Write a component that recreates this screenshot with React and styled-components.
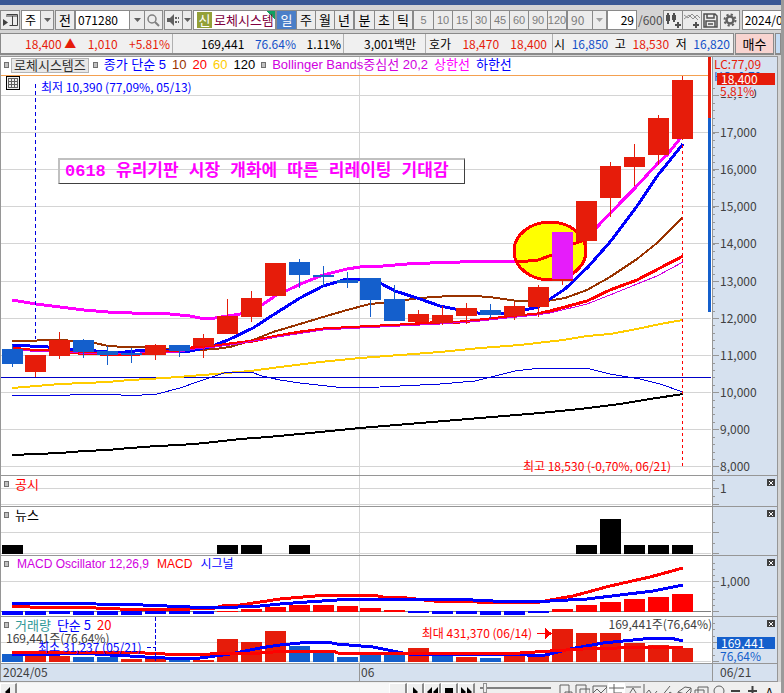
import React from 'react';
import styled, { createGlobalStyle } from 'styled-components';

const BASE = '"Noto Sans CJK KR", sans-serif';
const WIDE = '"Liberation Sans", "Noto Sans CJK KR", sans-serif';

const RED = '#e61c0a';
const BLUE = '#145fcc';
const LINE = '#969696';
const GRID = '#d4d4d4';
const AXIS = '#d6e1ef';

const GlobalStyle = createGlobalStyle`
  * { box-sizing: border-box; }
  body {
    margin: 0;
    background: #d4d4d4;
    font-family: ${BASE};
    font-size: 12px;
    line-height: 16px;
    color: #000;
    white-space: nowrap;
  }
  button, input, select {
    font: inherit;
    color: inherit;
    margin: 0;
    padding: 0;
    border-radius: 0;
    outline: none;
  }
`;

const Page = styled.div`
  display: flex;
  flex-direction: column;
  height: 100vh;
  min-height: 480px;
  overflow: hidden;
  border-right: 3px solid #9a9a9a;
`;

const TitleStrip = styled.header`
  flex: 0 0 5px;
  background: #3a5894;
  margin-right: -3px;
`;

const Toolbar = styled.div`
  display: flex;
  flex: 0 0 26px;
  padding: 5px 0 1px;
  overflow: hidden;
`;

const Group = styled.div`
  display: flex;
  flex: 0 0 auto;
  height: 20px;
  margin-right: ${({ $gap = 0 }) => $gap}px;
  border: 1px solid #8a8a8a;
  background: #fff;
`;

const ToolButton = styled.button`
  display: flex;
  align-items: center;
  justify-content: center;
  width: ${({ $w }) => $w}px;
  border: 0;
  border-left: ${({ $first }) => ($first ? 0 : '1px solid #8a8a8a')};
  background: ${({ $active }) => ($active ? '#4a7fc8' : '#ececec')};
  color: ${({ $active, $muted }) => ($active ? '#fff' : $muted ? '#7c7c7c' : '#000')};
  font-family: ${({ $muted }) => ($muted ? WIDE : BASE)};
  font-size: ${({ $muted }) => ($muted ? 11 : 13)}px;
`;

const Field = styled.input`
  width: ${({ $w }) => $w}px;
  border: 0;
  padding: 0 2px;
  background: #fff;
  text-align: ${({ $align }) => $align || 'left'};
`;

const Picker = styled.select`
  appearance: none;
  width: ${({ $w }) => $w}px;
  border: 0;
  padding: 0 3px;
  background: ${({ $muted }) => ($muted ? '#ececec' : '#fff')};
  color: ${({ $muted }) => ($muted ? '#7c7c7c' : '#000')};
`;

const StockName = styled.div`
  display: flex;
  align-items: center;
  width: 81px;
  padding-left: 3px;
  gap: 2px;
  font-size: 13px;
  color: #800040;
  background: linear-gradient(225deg, #10a060 6px, #fff 6px);
`;

const Badge = styled.span`
  width: 15px;
  text-align: center;
  background: #94a038;
  color: #fff;
`;

const Total = styled.span`
  width: 34px;
  padding-left: 1px;
  line-height: 20px;
  color: #505050;
`;

const QuoteRow = styled.div`
  display: flex;
  flex: 0 0 22px;
  align-items: stretch;
  margin: 2px 0 1px;
  overflow: hidden;
`;

const QuoteBox = styled.div`
  display: flex;
  flex: 1 1 0;
  min-width: 0;
  border: 1px solid #8a8a8a;
  border-width: 1px 1px 2px;
  background: #f0f0f0;
`;

const QuoteCell = styled.div`
  display: flex;
  align-items: center;
  justify-content: space-between;
  flex: 1 1 ${({ $w }) => $w}px;
  min-width: 0;
  padding: 0 ${({ $end = 2 }) => $end}px 0 ${({ $pad = 3 }) => $pad}px;
  border-left: ${({ $first }) => ($first ? 0 : '1px solid #b0b0b0')};
`;

const Num = styled.span`
  color: ${({ $c }) => $c || '#000'};
`;

const TradeButton = styled.button`
  flex: 0 0 ${({ $w }) => $w}px;
  margin-left: 1px;
  border: 1px solid #8a8a8a;
  border-width: 1px 1px 2px;
  background: ${({ $bg }) => $bg};
  font-size: 13px;
`;

const Chart = styled.main`
  display: flex;
  flex-direction: column;
  flex: 1 1 auto;
  min-height: 0;
  margin-right: 3px;
  border: 1px solid ${LINE};
  border-bottom: 0;
`;

const Panel = styled.section`
  display: grid;
  grid-template-columns: minmax(0, 1fr) 65px;
  flex: ${({ $h, $grow }) => ($grow ? `1 1 ${$h}px` : `0 0 ${$h}px`)};
  min-height: 0;
  border-bottom: 1px solid ${LINE};
`;

const Plot = styled.div`
  position: relative;
  min-height: 0;
  background: #fff;
`;

const Canvas = styled.svg`
  position: absolute;
  inset: 0;
  width: 100%;
  height: 100%;
  shape-rendering: crispEdges;
`;

const Scale = styled.div`
  position: relative;
  background: ${AXIS};
  border-left: 1px solid ${LINE};
`;

const ScaleLabel = styled.span`
  position: absolute;
  left: ${({ $left = 7 }) => $left}px;
  margin-top: -6px;
  line-height: 12px;
  color: ${({ $c }) => $c || '#404040'};
  background: ${({ $bg }) => $bg || 'transparent'};
`;

const PriceTag = styled(ScaleLabel)`
  left: 4px;
  right: 2px;
  padding-left: 4px;
  color: #fff;
`;

const CloseButton = styled.button`
  position: absolute;
  top: 3px;
  right: 2px;
  width: 8px;
  height: 7px;
  border: 0;
  background: #404040;
  display: flex;
  align-items: center;
  justify-content: center;
`;

const Legend = styled.div`
  position: relative;
  display: flex;
  align-items: center;
  gap: ${({ $gap = 6 }) => $gap}px;
  padding: 0 3px;
  font-family: ${({ $wide }) => ($wide ? WIDE : BASE)};
  font-size: ${({ $size = 13 }) => $size}px;
`;

const Marker = styled.i`
  width: 5px;
  height: 6px;
  border: 1px solid #707070;
  background: #c0c0c0;
`;

const LegendName = styled.span`
  height: 15px;
  line-height: 13px;
  margin: 0 -2px 0 -4px;
  padding: 0 2px;
  border: 1px solid #b4b4b4;
  background: #e8e8e8;
  color: #303030;
`;

const Note = styled.span`
  position: absolute;
  top: ${({ $top }) => $top};
  left: ${({ $left }) => $left || 'auto'};
  right: ${({ $right }) => $right || 'auto'};
  line-height: 14px;
  color: ${({ $c }) => $c};
`;

const Memo = styled(Note)`
  height: 26px;
  line-height: 23px;
  padding: 0 15px 0 5px;
  border: 1px solid #404040;
  border-top: 2px solid #c0c0c0;
  border-left: 2px solid #c0c0c0;
  font-family: "Liberation Mono", "Noto Sans CJK KR", monospace;
  font-weight: 700;
  font-size: 17px;
`;

const GridToggle = styled.button`
  position: absolute;
  top: 19px;
  left: 5px;
  width: 14px;
  height: 14px;
  border: 1px solid #000;
  background: #eee;
  display: flex;
`;

const DateCell = styled.div`
  display: flex;
  padding-left: ${({ $pad = 1 }) => $pad}px;
  background: ${AXIS};
  color: #404040;
  border-left: ${({ $edge }) => ($edge ? `1px solid ${LINE}` : 0)};
`;

const Month = styled.span`
  flex: 0 0 50%;
  padding-left: 1px;
  & + & {
    margin-left: 2px;
    border-left: 1px solid ${LINE};
  }
`;

const Footer = styled.footer`
  display: flex;
  flex: 0 0 11px;
  align-items: flex-start;
  background: #efefef;
  overflow: hidden;
  padding: 1px 3px 0 0;
`;

const Track = styled.div`
  flex: 1 1 0;
  height: 16px;
  background: #f7f7f7;
`;

const FootButton = styled.button`
  flex: 0 0 ${({ $w = 17 }) => $w}px;
  height: 18px;
  display: flex;
  align-items: center;
  justify-content: center;
  border: 1px solid #fff;
  border-width: 1px 2px 1px 1px;
  border-right-color: #8a8a8a;
  background: #efefef;
`;

const IconButton = styled.button`
  flex: 0 0 17px;
  height: 18px;
  padding: 1px;
  border: 0;
  background: ${({ $active }) => ($active ? '#fff' : 'transparent')};
`;

const Zoom = styled.input`
  appearance: none;
  flex: 0 0 71px;
  width: 71px;
  min-width: 0;
  && { margin: 0 6px 0 5px; }
  height: 10px;
  background: linear-gradient(#808080, #808080) 0 4px / 100% 2px no-repeat;
  &::-webkit-slider-thumb {
    appearance: none;
    width: 4px;
    height: 10px;
    border: 1px solid #909090;
    background: #efefef;
  }
`;

const ArrowDown = ({ color = '#606060' }) => (
  <svg width="7" height="4" viewBox="0 0 7 4"><path d="M0 0h7L3.5 4z" fill={color} /></svg>
);

// x of the left edge of candle i
const barX = (i) => Math.floor(2 + 23.93 * i);

// [body top, body bottom, high, low, rising]
const candles = [
  [349, 364, 345, 367, 0], [355, 372, 355, 377, 1], [340, 356, 332, 359, 1], [340, 352, 339, 358, 0],
  [351, 355, 346, 365, 0], [353, 355, 348, 363, 0], [345, 355, 344, 360, 1], [345, 351, 345, 357, 0],
  [338, 346, 334, 358, 1], [316, 334, 299, 334, 1], [298, 317, 291, 322, 1], [263, 296, 263, 296, 1],
  [262, 275, 259, 288, 0], [275, 277, 266, 286, 0], [280, 283, 272, 288, 0], [278, 300, 278, 317, 0],
  [299, 321, 285, 321, 0], [314, 322, 310, 322, 1], [315, 323, 306, 325, 1], [308, 316, 303, 324, 1],
  [310, 315, 304, 318, 0], [306, 316, 302, 320, 1], [287, 307, 285, 317, 1], [232, 281, 232, 285, 1],
  [201, 241, 201, 246, 1], [166, 198, 162, 217, 1], [157, 167, 144, 186, 1], [118, 155, 115, 165, 1],
  [80, 139, 76, 140, 1],
];

const news = [545, 0, 0, 0, 0, 0, 0, 0, 0, 545, 545, 0, 545, 0, 0, 0, 0, 0, 0, 0, 0, 0, 0, 0, 545, 519, 545, 545, 545];

const oscillator = [
  615, 615, 614, 615, 615, 615, 614, 614, 614, 611, 609, 607, 605, 605, 606, 608, 610, 613, 614, 614, 615, 615,
  613, 609, 605, 602, 599, 597, 594,
];

const volumes = [
  [654, 0], [656, 1], [656, 1], [657, 0], [657, 0], [659, 1], [659, 1], [660, 0], [660, 1], [639, 1],
  [642, 1], [631, 1], [646, 0], [653, 0], [657, 0], [653, 0], [655, 0], [648, 1], [655, 0], [657, 1],
  [658, 0], [655, 1], [656, 1], [629, 1], [633, 1], [633, 1], [643, 1], [645, 1], [648, 1],
];

const lines = {
  upper: '12,300 36,304 60,307 84,310 108,312 132,313 160,313 190,316 200,318 215,318 240,314 262,305 275,296 290,289 303,283 323,275 347,269 360,267 383,266 407,264 430,263 460,262 478,261 503,261 518,262 538,260 552,255 573,244 587,239 597,227 623,200 635,188 658,163 667,155 682,136',
  ma5: '12,345 30,346 48,347 70,349 84,350 108,352 125,352 145,350 170,351 190,351 205,348 215,345 228,340 253,328 273,315 300,298 323,286 337,282 347,279 360,280 382,284 395,291 417,298 440,306 455,309 478,313 500,314 520,311 538,307 550,299 565,289 588,267 610,242 635,209 658,175 683,144',
  ma10: '12,341 36,341 38,340 60,340 75,341 95,343 108,346 125,347 145,347 160,348 175,350 200,350 215,349 230,347 253,340 273,332 300,324 323,317 347,310 370,304 390,302 420,298 450,296 473,296 490,297 517,301 547,301 565,298 587,290 610,277 637,259 657,243 682,218',
  ma20: '12,348 30,350 60,351 78,353 100,354 125,355 140,354 155,352 180,351 195,347 215,346 237,343 253,341 277,336 300,332 323,329 360,327 400,325 430,323 460,322 480,320 507,317 537,314 550,311 587,301 610,290 637,280 660,268 683,256',
  middle: '12,349 30,351 60,352 78,353 125,354 155,352 180,352 195,349 215,347 237,344 277,337 323,330 360,328 400,326 440,324 480,321 507,318 537,315 550,313 587,304 610,295 637,284 657,276 683,262',
  ma60: '12,388 36,386 60,384 84,383 108,382 130,380 165,378 190,376 215,374 250,371 280,367 320,362 360,358 400,355 440,352 480,348 520,345 563,340 587,336 610,334 637,329 660,324 683,320',
  lower: '12,395 70,395 72,394 119,394 121,395 142,395 157,394 180,388 200,381 215,376 227,372 251,372 262,376 280,380 300,383 345,388 380,387 440,384 475,381 495,376 515,371 540,368 565,368 590,369 610,374 640,379 660,384 683,392',
  ma120: '12,455 36,454 60,453 84,451 108,450 130,448 157,446 180,445 205,443 240,439 268,437 310,433 360,428 420,423 480,418 540,413 580,409 620,404 650,399 683,394',
  macd: '12,606 30,607 70,607 96,608 120,609 190,609 215,608 222,606 240,605 260,602 280,599 303,597 327,595 373,595 383,597 407,598 433,601 477,602 510,603 540,602 550,600 573,596 610,586 650,577 683,568',
  signal: '12,603 48,603 96,604 143,605 190,607 238,607 260,606 280,604 307,602 337,600 360,599 453,599 493,601 550,601 587,599 620,595 653,591 683,585',
  vol5: '12,654 45,655 75,653 95,654 110,655 130,656 145,657 165,658 200,658 215,656 230,654 260,648 280,645 310,642 327,642 337,644 373,647 393,651 407,654 527,655 540,656 550,654 570,649 603,643 653,638 670,638 683,641',
  vol20: '12,652 130,652 145,653 165,654 210,654 218,653 260,653 287,651 333,651 338,653 520,653 550,651 583,649 617,648 653,647 683,648',
};

const Path = ({ of, color, w = 2 }) => (
  <polyline points={lines[of]} fill="none" stroke={color} strokeWidth={w} />
);

const Area = ({ top, height, grid, children }) => (
  <Canvas viewBox={`1 ${top} 711 ${height}`} preserveAspectRatio="none">
    {grid.map((y) => <rect key={y} x="1" y={y} width="710" height="1" fill={GRID} />)}
    <rect x="359" y={top} width="1" height={height} fill={GRID} />
    {children}
  </Canvas>
);

const Ticks = ({ top, height, major, minor }) => (
  <Canvas viewBox={`713 ${top} 64 ${height}`} preserveAspectRatio="none">
    {minor.map((y) => <rect key={y} x="713" y={y} width="2" height="1" fill={LINE} />)}
    {major.map((y) => <rect key={y} x="713" y={y} width="6" height="1" fill={LINE} />)}
  </Canvas>
);

const Close = () => (
  <CloseButton aria-label="닫기">
    <svg width="4" height="4" viewBox="0 0 4 4"><path d="M0 0l4 4M4 0L0 4" stroke="#fff" /></svg>
  </CloseButton>
);

const at = (y, top, height) => ({ top: `${((y - top) / height) * 100}%` });

const prices = [17, 16, 15, 14, 13, 12, 11, 10, 9, 8];
const priceY = (k) => Math.round(95 + (18 - k) * 37.1);
const priceMinor = Array.from({ length: 52 }, (_, n) => Math.round(88 + n * 7.42)).filter((y) => y < 474);

function TopBar() {
  return (
    <Toolbar>
      <Group $gap={1}>
        <ToolButton $first $w={18} aria-label="창">
          <svg width="15" height="14" viewBox="0 0 15 14" fill="none" stroke="#404040">
            <path d="M3.5 1.5h11v11h-8M3 3h11M9.5 3v9" />
            <path d="M0 6l5 3.5-5 3.5z" fill="#404040" stroke="none" />
          </svg>
        </ToolButton>
      </Group>
      <Group $gap={1}>
        <Picker $w={18} aria-label="구분" defaultValue="주"><option>주</option></Picker>
        <ToolButton $w={13} aria-label="구분 열기"><ArrowDown /></ToolButton>
      </Group>
      <Group><ToolButton $first $w={18}>전</ToolButton></Group>
      <Group $gap={1}>
        <Field $w={53} aria-label="종목코드" defaultValue="071280" />
        <ToolButton $w={15} aria-label="종목 목록"><ArrowDown /></ToolButton>
        <ToolButton $w={18} aria-label="검색">
          <svg width="13" height="13" viewBox="0 0 13 13" fill="none" stroke="#808080" strokeWidth="1.5">
            <circle cx="5" cy="5" r="4" /><path d="M8 8l4 4" strokeWidth="2" />
          </svg>
        </ToolButton>
      </Group>
      <Group $gap={1}>
        <ToolButton $first $w={17} aria-label="소리">
          <svg width="13" height="12" viewBox="0 0 13 12" fill="#606060">
            <path d="M0 4h3l4-4v12L3 8H0zM8 3h2v2H8zM8 7h2v2H8zM11 3h1v2h-1zM11 7h1v2h-1z" />
          </svg>
        </ToolButton>
        <ToolButton $w={9} aria-label="소리 설정"><ArrowDown /></ToolButton>
      </Group>
      <Group>
        <StockName><Badge>신</Badge>로체시스템</StockName>
      </Group>
      <Group>
        {['일', '주', '월', '년'].map((t, n) => (
          <ToolButton key={t} $first={n === 0} $w={19} $active={n === 0}>{t}</ToolButton>
        ))}
      </Group>
      <Group>
        {['분', '초', '틱'].map((t, n) => <ToolButton key={t} $first={n === 0} $w={19}>{t}</ToolButton>)}
      </Group>
      <Group>
        {['5', '10', '15', '30', '45', '60', '90', '120'].map((t, n) => (
          <ToolButton key={t} $first={n === 0} $w={19} $muted>{t}</ToolButton>
        ))}
      </Group>
      <Group>
        <Picker $w={24} $muted aria-label="분 주기" defaultValue="90"><option>90</option></Picker>
        <ToolButton $w={14} aria-label="분 주기 열기"><ArrowDown color="#a0a0a0" /></ToolButton>
      </Group>
      <Group><Field $w={28} $align="right" aria-label="봉 개수" defaultValue="29" /></Group>
      <Total>/600</Total>
      <Group $gap={2}>
        <ToolButton $first $w={18} aria-label="봉 추가">
          <svg width="16" height="16" viewBox="0 0 16 16" fill="#505050">
            <path d="M1 3h4v6H1zM2 1h2v11H2zM7 3h4v5H7zM8 1h2v9H8zM12 10h2v2h2v2h-2v2h-2v-2h-2v-2h2z" />
          </svg>
        </ToolButton>
        <ToolButton $w={19} aria-label="지표 추가">
          <svg width="16" height="16" viewBox="0 0 16 16">
            <path d="M0 7l5-4 4 4 4-4 3 3M0 3l4 3 4-4 6 6" fill="none" stroke="#909090" />
            <path d="M11 10h2v2h2v2h-2v2h-2v-2H9v-2h2z" fill="#505050" />
          </svg>
        </ToolButton>
        <ToolButton $w={19} aria-label="저장">
          <svg width="15" height="15" viewBox="0 0 15 15" fill="none" stroke="#505050" strokeWidth="1.5">
            <path d="M1 1h11l2 2v11H1zM4 1v4h7V1M3 14V8h9v6M5 11h5" />
          </svg>
        </ToolButton>
        <ToolButton $w={19} aria-label="설정">
          <svg width="14" height="14" viewBox="0 0 14 14" fill="none" stroke="#606060">
            <circle cx="7" cy="7" r="3.5" strokeWidth="2.5" />
            <circle cx="7" cy="7" r="5.5" strokeWidth="2" strokeDasharray="2.2 2.12" />
          </svg>
        </ToolButton>
      </Group>
      <Group><Field $w={72} aria-label="날짜" defaultValue="2024/06/21" /></Group>
    </Toolbar>
  );
}

function Quotes() {
  return (
    <QuoteRow>
      <QuoteBox>
        <QuoteCell $first $w={171} $pad={24}>
          <Num $c={RED}>18,400 ▲</Num><Num $c={RED}>1,010</Num><Num $c={RED}>+5.81%</Num>
        </QuoteCell>
        <QuoteCell $w={171} $pad={28}>
          <Num>169,441</Num><Num $c="#1450c8">76.64%</Num><Num>1.11%</Num>
        </QuoteCell>
        <QuoteCell $w={82} $pad={20}><Num>3,001백만</Num></QuoteCell>
        <QuoteCell $w={127} $end={5}>
          <Num>호가</Num><Num $c={RED}>18,470</Num><Num $c={RED}>18,400</Num>
        </QuoteCell>
        <QuoteCell $w={181} $pad={1} $end={3}>
          <Num>시</Num><Num $c="#1450c8">16,850</Num>
          <Num>고</Num><Num $c={RED}>18,530</Num>
          <Num>저</Num><Num $c="#1450c8">16,820</Num>
        </QuoteCell>
      </QuoteBox>
      <TradeButton $w={39} $bg="#f8d4d0">매수</TradeButton>
      <TradeButton $w={6} $bg="#c4dcf4" aria-label="매도" />
    </QuoteRow>
  );
}

function PricePanel() {
  return (
    <Panel $h={419} $grow>
      <Plot>
        <Area top={57} height={418} grid={[95, ...prices.map(priceY)]}>
          <rect x="1" y="75" width="707" height="1" fill="#f4a050" />
          <rect x="1" y="377" width="710" height="1" fill="#0000c8" />
          <Path of="upper" color="#ff00ff" w={3} />
          <Path of="ma60" color="#ffcc00" />
          <Path of="lower" color="#0000e0" w={1} />
          <Path of="ma120" color="#000" />
          <Path of="ma10" color="#993300" />
          <Path of="ma5" color="#0000ff" w={3} />
          <Path of="ma20" color="#ff0000" w={3} />
          <Path of="middle" color="#d000e0" w={1} />
          <ellipse cx="550" cy="251" rx="36" ry="29" fill="#ffff00" stroke="#ff0000" strokeWidth="3" />
          <polyline points="518,262 538,260 552,255 573,244 585,240" fill="none" stroke="#ff0000" strokeWidth="3" />
          {candles.map(([top, bottom, high, low, up], i) => (
            <g key={i} fill={up ? RED : BLUE}>
              <rect x={barX(i) + 10} y={high} width="1" height={low - high} />
              <rect x={barX(i)} y={top} width="21" height={bottom - top} />
            </g>
          ))}
          <rect x="552" y="232" width="21" height="47" fill="#e61cfa" />
          <path d="M35.5 84v255" stroke="#0000e0" strokeDasharray="4 3" />
          <path d="M682.5 145v321" stroke="#ff0000" strokeDasharray="3 3" />
          <rect x="708" y="57" width="3" height="61" fill={RED} />
          <rect x="708" y="118" width="3" height="194" fill={BLUE} />
        </Area>
        <Legend $wide>
          <Marker />
          <LegendName>로체시스템즈</LegendName>
          <Marker />
          <Num $c="#0000ff">종가 단순 5</Num>
          <Num $c="#993300">10</Num>
          <Num $c="#ff0000">20</Num>
          <Num $c="#ffcc00">60</Num>
          <Num>120</Num>
          <Marker />
          <Num $c="#d000e0">Bollinger Bands중심선 20,2</Num>
          <Num $c="#ff00ff">상한선</Num>
          <Num $c="#0000ff">하한선</Num>
        </Legend>
        <GridToggle aria-label="표 보기">
          <svg width="12" height="12" viewBox="0 0 12 12" fill="none" stroke="#606060" shapeRendering="crispEdges">
            <path d="M1.5 1.5h9v9h-9zM1 4.500h10M1 7.500h10M4.500 2v9M7.500 2v9" />
          </svg>
        </GridToggle>
        <Note $top="23px" $left="40px" $c="#0000ff">최저 10,390 (77,09%, 05/13)</Note>
        <Memo $top="101px" $left="57px" $c="#ff00ff">0618 유리기판 시장 개화에 따른 리레이팅 기대감</Memo>
        <Note $top="calc(100% - 16px)" $right="41px" $c="#ff0000">최고 18,530 (-0,70%, 06/21)</Note>
      </Plot>
      <Scale>
        <Ticks top={57} height={418} major={[95, ...prices.map(priceY)]} minor={priceMinor} />
        {prices.map((k) => (
          <ScaleLabel key={k} style={at(priceY(k), 57, 418)}>{k},000</ScaleLabel>
        ))}
        <ScaleLabel style={at(93, 57, 418)}>18,000</ScaleLabel>
        <ScaleLabel $left={1} $c={RED} style={at(64, 57, 418)}>LC:77,09</ScaleLabel>
        <ScaleLabel $left={1} $c={BLUE} style={at(76, 57, 418)}>HC:-0,70</ScaleLabel>
        <ScaleLabel $c={RED} $bg={AXIS} style={at(91, 57, 418)}>5,81%</ScaleLabel>
        <PriceTag $bg={RED} style={at(79, 57, 418)}>18,400</PriceTag>
      </Scale>
    </Panel>
  );
}

function SubPanels() {
  return (
    <>
      <Panel $h={31}>
        <Plot>
          <Area top={476} height={30} grid={[488, 504]} />
          <Legend><Marker /><Num $c="#ff0000">공시</Num></Legend>
        </Plot>
        <Scale>
          <Ticks top={476} height={30} major={[488, 504]} minor={[480, 496]} />
          <ScaleLabel style={at(488, 476, 30)}>1</ScaleLabel>
          <Close />
        </Scale>
      </Panel>
      <Panel $h={49}>
        <Plot>
          <Area top={507} height={48} grid={[532, 553]}>
            {news.map((y, i) => y > 0 && <rect key={i} x={barX(i)} y={y} width="21" height={554 - y} />)}
          </Area>
          <Legend><Marker /><Num>뉴스</Num></Legend>
        </Plot>
        <Scale>
          <Ticks top={507} height={48} major={[532, 553]} minor={[522, 543]} />
          <Close />
        </Scale>
      </Panel>
      <Panel $h={61}>
        <Plot>
          <Area top={556} height={60} grid={[581]}>
            <rect x="1" y="611" width="710" height="1" fill="#808080" />
            {oscillator.map((y, i) => (
              <rect
                key={i}
                x={barX(i)}
                y={Math.min(y, 611)}
                width="21"
                height={y > 611 ? y - 611 : 612 - y}
                fill={y > 611 ? '#0000ff' : '#ff0000'}
              />
            ))}
            <Path of="macd" color="#ff0000" w={3} />
            <Path of="signal" color="#0000ff" w={3} />
          </Area>
          <Legend $wide $size={12} $gap={8}>
            <Marker />
            <Num $c="#d000e0">MACD Oscillator 12,26,9</Num>
            <Num $c="#ff0000">MACD</Num>
            <Num $c="#0000ff">시그널</Num>
          </Legend>
        </Plot>
        <Scale>
          <Ticks top={556} height={60} major={[581, 611]} minor={[563, 569, 575, 587, 593, 599, 605]} />
          <ScaleLabel style={at(581, 556, 60)}>1,000</ScaleLabel>
          <Close />
        </Scale>
      </Panel>
      <Panel $h={47}>
        <Plot>
          <Area top={617} height={46} grid={[642, 661]}>
            {volumes.map(([y, up], i) => (
              <rect key={i} x={barX(i)} y={y} width="21" height={662 - y} fill={up ? RED : BLUE} />
            ))}
            <Path of="vol5" color="#0000ff" w={3} />
            <Path of="vol20" color="#ff0000" w={3} />
            <path d="M155.5 617v44M147 647.5h9" fill="none" stroke="#0000e0" strokeDasharray="4 2" />
            <path d="M537 633.5h9" stroke="#ff0000" />
            <path d="M545 628l7 5.5-7 5.5z" fill="#ff0000" />
          </Area>
          <Legend>
            <Marker />
            <Num $c="#309898">거래량</Num>
            <Num $c="#0000ff">단순 5</Num>
            <Num $c="#ff0000">20</Num>
          </Legend>
          <Note $top="14px" $left="5px" $c="#404040">169,441주(76,64%)</Note>
          <Note $top="23px" $left="37px" $c="#0000ff">최소 31,237 (05/21)</Note>
          <Note $top="9px" $right="180px" $c="#ff0000">최대 431,370 (06/14)</Note>
          <Note $top="0px" $right="0px" $c="#404040">169,441주(76,64%)</Note>
        </Plot>
        <Scale>
          <Ticks top={617} height={46} major={[642, 661]} minor={[623, 629, 636, 648, 655]} />
          <ScaleLabel style={at(641, 617, 46)}>250,000</ScaleLabel>
          <PriceTag $bg={BLUE} style={at(643, 617, 46)}>169,441</PriceTag>
          <ScaleLabel $c={BLUE} style={at(656, 617, 46)}>76,64%</ScaleLabel>
          <Close />
        </Scale>
      </Panel>
      <Panel $h={18}>
        <DateCell><Month>2024/05</Month><Month>06</Month></DateCell>
        <DateCell $edge $pad={7}>06/21</DateCell>
      </Panel>
    </>
  );
}

const playIcons = [
  ['재생', 'M4 0l5 5-5 5z'],
  ['뒤로', 'M6 0v10L1 5zM12 0v10L7 5z'],
  ['정지', 'M2 1h8v8H2z'],
  ['앞으로', 'M1 0l5 5-5 5zM7 0l5 5-5 5z'],
];

const drawIcons = [
  ['새 창', 'M2 1h9v14H2zM7 8h7v7H7z'],
  ['겹치기', 'M1 1h10v9H1zM5 5h10v9H5z'],
  ['추세', 'M1 2h14v12H1zM1 9l4-4 4 4 6-6'],
  ['십자선', 'M0 4h15M5 0v15M5 9h8'],
  ['수평선', 'M0 3h15M2 12l5-8 5 8'],
  ['파동', 'M1 0v15h14M1 12L6 6l4 6 4-5'],
  ['각도', 'M1 13L10 2M5 14l5-6 5 4'],
  ['입체', 'M1 8l7-5 6 1-6 6zM1 8v4l7 2v-4M8 14l6-6V4'],
  ['복사', 'M1 6h9v8H1zM4 3h10v9H4z'],
  ['돋보기', 'M3 7a5 5 0 1 1 10 0 5 5 0 1 1-10 0M10 11l4 4'],
];

function BottomBar() {
  return (
    <Footer>
      <FootButton aria-label="왼쪽">
        <svg width="6" height="10" viewBox="0 0 6 10"><path d="M5 0v10L0 5z" /></svg>
      </FootButton>
      <Track />
      <FootButton $w={18} aria-label="이동" />
      {playIcons.map(([label, d]) => (
        <FootButton key={label} aria-label={label}>
          <svg width="12" height="10" viewBox="0 0 12 10"><path d={d} /></svg>
        </FootButton>
      ))}
      <Zoom type="range" aria-label="확대" min="0" max="100" defaultValue="5" />
      {drawIcons.map(([label, d], n) => (
        <IconButton key={label} $active={n === 3} aria-label={label}>
          <svg width="15" height="15" viewBox="0 0 15 15" fill="none" stroke="#606060"><path d={d} /></svg>
        </IconButton>
      ))}
      <IconButton aria-label="축소">
        <svg width="15" height="15" viewBox="0 0 15 15"><path d="M3 6h9v2H3z" fill="#404040" /></svg>
      </IconButton>
      <IconButton aria-label="늘리기">
        <svg width="15" height="15" viewBox="0 0 15 15"><path d="M3 6h9v2H3zM6.5 2h2v9h-2z" fill="#404040" /></svg>
      </IconButton>
      <IconButton aria-label="글자">A</IconButton>
    </Footer>
  );
}

export default function App() {
  return (
    <Page>
      <GlobalStyle />
      <TitleStrip />
      <TopBar />
      <Quotes />
      <Chart>
        <PricePanel />
        <SubPanels />
      </Chart>
      <BottomBar />
    </Page>
  );
}
